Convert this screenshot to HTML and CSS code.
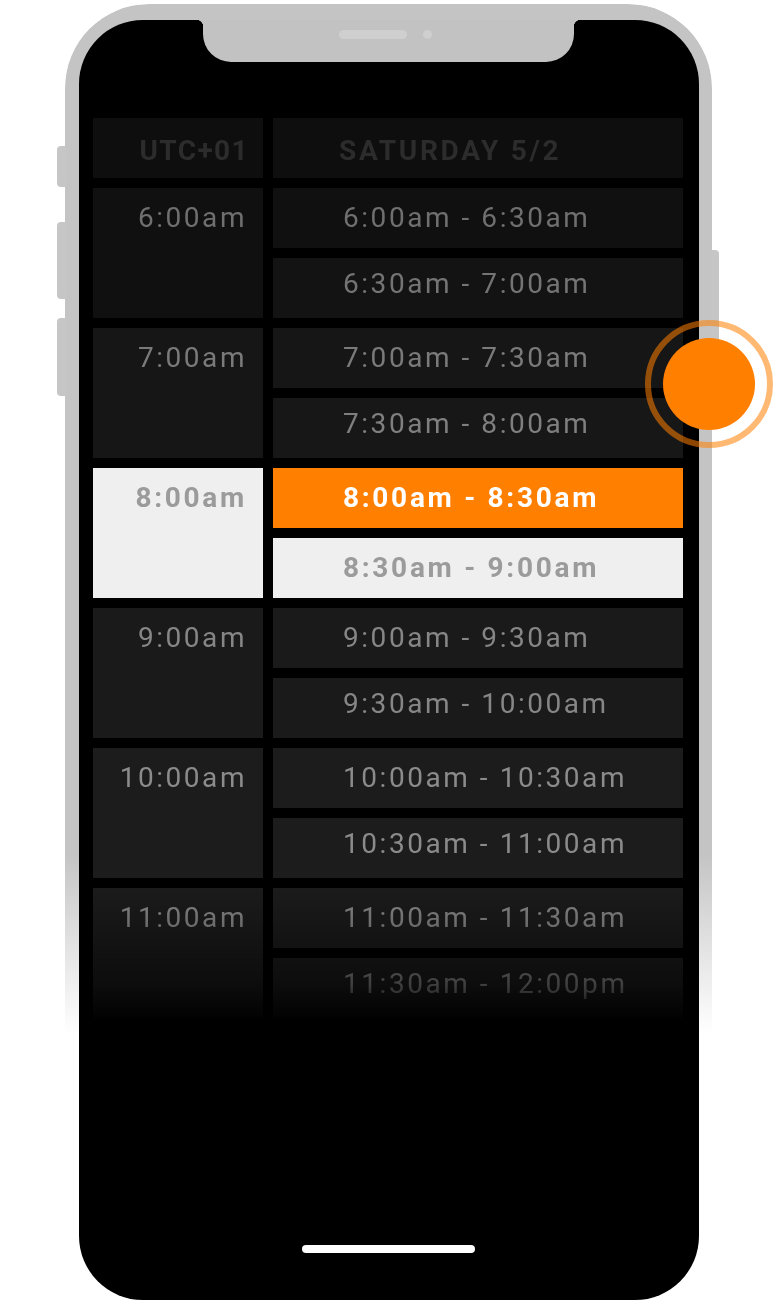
FILE: index.html
```html
<!DOCTYPE html>
<html lang="en">
<head>
<meta charset="utf-8">
<title>Schedule</title>
<link rel="stylesheet" href="styles.css">
</head>
<body>
<div class="stage">
  <div class="phone">
    <span class="side-btn btn-mute"></span>
    <span class="side-btn btn-vol-up"></span>
    <span class="side-btn btn-vol-down"></span>
    <span class="side-btn btn-power"></span>
    <div class="screen">
      <div class="notch"><span class="speaker"></span><span class="camera"></span></div>
      <div class="schedule">
        <div class="cell head zone">UTC+01</div>
        <div class="cell head day">SATURDAY 5/2</div>

        <div class="cell hour tone-a">6:00am</div>
        <div class="cell slot tone-a">6:00am - 6:30am</div>
        <div class="cell slot slot-late tone-a2">6:30am - 7:00am</div>

        <div class="cell hour tone-b">7:00am</div>
        <div class="cell slot tone-b">7:00am - 7:30am</div>
        <div class="cell slot slot-late tone-b2">7:30am - 8:00am</div>

        <div class="cell hour is-selected">8:00am</div>
        <div class="cell slot is-active">8:00am - 8:30am</div>
        <div class="cell slot is-selected">8:30am - 9:00am</div>

        <div class="cell hour tone-c">9:00am</div>
        <div class="cell slot tone-c">9:00am - 9:30am</div>
        <div class="cell slot slot-late tone-c">9:30am - 10:00am</div>

        <div class="cell hour tone-d">10:00am</div>
        <div class="cell slot tone-d">10:00am - 10:30am</div>
        <div class="cell slot slot-late tone-d">10:30am - 11:00am</div>

        <div class="cell hour tone-d">11:00am</div>
        <div class="cell slot tone-d">11:00am - 11:30am</div>
        <div class="cell slot slot-late tone-d">11:30am - 12:00pm</div>
      </div>
      <div class="home-bar"></div>
    </div>
  </div>
  <div class="drag-handle"><span class="ring"></span><span class="knob"></span></div>
</div>
</body>
</html>
```

FILE: styles.css
```css
* { box-sizing: border-box; }

html, body {
  margin: 0;
  padding: 0;
  background: #ffffff;
}

body {
  width: 780px;
  height: 1306px;
  overflow: hidden;
  font-family: Roboto, "Noto Sans", "Liberation Sans", sans-serif;
}

.stage {
  position: relative;
  width: 780px;
  height: 1306px;
  padding: 4px 0 0 65px;
}

/* ---------- phone ---------- */
.phone {
  position: relative;
  width: 647px;
  height: 1302px;
  padding: 16px 13px 0 14px;
}

.phone::before {
  content: "";
  position: absolute;
  inset: 0;
  border-radius: 84px;
  background: #c4c4c4;
  box-shadow: 0 8px 60px rgba(0, 0, 0, 0.11);
  -webkit-mask-image: linear-gradient(to bottom, #000 0, #000 850px, transparent 1030px);
  mask-image: linear-gradient(to bottom, #000 0, #000 850px, transparent 1030px);
}

.side-btn {
  position: absolute;
  background: #c6c6c6;
}

.btn-mute,
.btn-vol-up,
.btn-vol-down {
  left: -8px;
  width: 9px;
  border-radius: 4px 0 0 4px;
}

.btn-mute { top: 142px; height: 41px; }
.btn-vol-up { top: 218px; height: 77px; }
.btn-vol-down { top: 314px; height: 78px; }

.btn-power {
  right: -7px;
  top: 246px;
  width: 8px;
  height: 124px;
  border-radius: 0 4px 4px 0;
}

/* ---------- screen ---------- */
.screen {
  position: relative;
  width: 620px;
  height: 1280px;
  background: #000;
  border-radius: 64px;
  display: flex;
  flex-direction: column;
  padding: 98px 16px 0 14px;
}

.notch {
  position: absolute;
  top: 0;
  left: 124px;
  width: 371px;
  height: 42px;
  background: #c2c2c2;
  border-radius: 0 0 28px 28px;
}

.notch::before,
.notch::after {
  content: "";
  position: absolute;
  top: 0;
  width: 7px;
  height: 7px;
}

.notch::before {
  left: -7px;
  background: radial-gradient(circle at 0 100%, transparent 7px, #c2c2c2 7.5px);
}

.notch::after {
  right: -7px;
  background: radial-gradient(circle at 100% 100%, transparent 7px, #c2c2c2 7.5px);
}

.speaker {
  position: absolute;
  left: 136px;
  top: 10px;
  width: 68px;
  height: 9px;
  border-radius: 5px;
  background: #cfcfcf;
}

.camera {
  position: absolute;
  left: 220px;
  top: 10px;
  width: 9px;
  height: 9px;
  border-radius: 50%;
  background: #cfcfcf;
}

/* ---------- schedule grid ---------- */
.schedule {
  display: grid;
  grid-template-columns: 170px 410px;
  grid-auto-rows: 60px;
  gap: 10px;
  -webkit-mask-image: linear-gradient(to bottom, #000 0, #000 765px, rgba(0,0,0,0.45) 867px, transparent 905px);
  mask-image: linear-gradient(to bottom, #000 0, #000 765px, rgba(0,0,0,0.45) 867px, transparent 905px);
}

.cell {
  font-size: 28px;
  font-weight: 400;
  letter-spacing: 2.55px;
  line-height: 60px;
  white-space: nowrap;
}

.head {
  background: #0e0e0e;
  color: #2c2c2c;
  font-weight: 700;
  line-height: 66px;
}

.zone {
  text-align: right;
  padding-right: 14px;
  letter-spacing: 1.4px;
}

.day {
  padding-left: 66px;
  letter-spacing: 2.7px;
}

.hour {
  grid-column: 1;
  grid-row: span 2;
  text-align: right;
  padding-right: 16px;
}

.slot {
  grid-column: 2;
  padding-left: 70px;
}

.slot-late {
  line-height: 52px;
}

.tone-a  { background: #101010; color: #6f6f6f; }
.tone-a2 { background: #131313; color: #747474; }
.tone-b  { background: #161616; color: #7a7a7a; }
.tone-b2 { background: #171717; color: #7f7f7f; }
.tone-c  { background: #1a1a1a; color: #868686; }
.tone-d  { background: #1c1c1c; color: #8b8b8b; }

.is-selected {
  background: #efefef;
  color: #9b9b9b;
  font-weight: 700;
  letter-spacing: 2.7px;
}

.is-active {
  background: #ff7f00;
  color: #ffffff;
  font-weight: 700;
  letter-spacing: 2.7px;
}

.home-bar {
  margin: auto auto 47px;
  width: 173px;
  height: 8px;
  border-radius: 4px;
  background: #ffffff;
}

/* ---------- drag handle ---------- */
.drag-handle {
  position: absolute;
  left: 645px;
  top: 320px;
  width: 128px;
  height: 128px;
}

.ring {
  position: absolute;
  inset: 0;
  border-radius: 50%;
  border: 6px solid rgba(255, 127, 0, 0.55);
}

.knob {
  position: absolute;
  left: 18px;
  top: 18px;
  width: 92px;
  height: 92px;
  border-radius: 50%;
  background: #ff7f00;
}
```
